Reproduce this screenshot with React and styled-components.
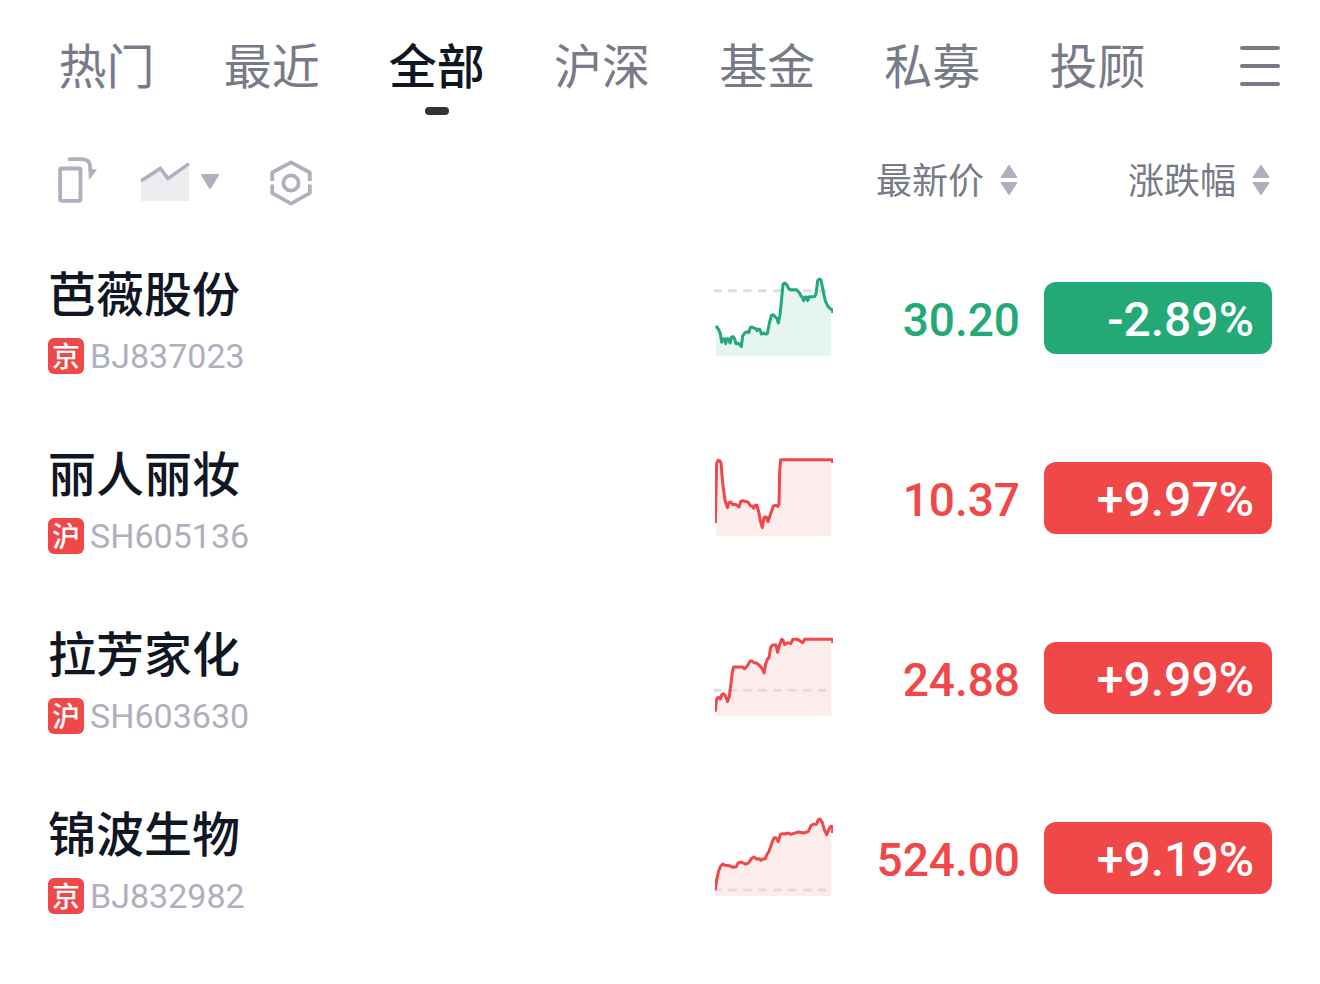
import React from "react";
import styled, { createGlobalStyle } from "styled-components";

const GlobalStyle = createGlobalStyle`
  * { box-sizing: border-box; }
  body {
    margin: 0;
    background: #fff;
    color: #111625;
    font-family: "Noto Sans CJK SC", sans-serif;
  }
  button {
    margin: 0;
    padding: 0;
    border: 0;
    background: none;
    color: inherit;
    font: inherit;
    cursor: pointer;
  }
  svg { display: block; flex: none; }
`;

const RED = "#f04848";
const GREEN = "#22a975";

const Header = styled.header`
  display: flex;
  height: 132px;
  padding: 0 40px 0 24px;
`;

const Tabs = styled.nav`
  display: flex;
  flex: 1;
`;

const Tab = styled.button`
  position: relative;
  flex: 1;
  padding-bottom: 6px;
  font-size: 48px;
  line-height: 64px;
  white-space: nowrap;
  color: ${(p) => (p.$active ? "#111625" : "#787b87")};
  font-weight: ${(p) => (p.$active ? 500 : 400)};
`;

const Indicator = styled.span`
  position: absolute;
  left: 50%;
  bottom: 17px;
  width: 24px;
  height: 8px;
  margin-left: -12px;
  border-radius: 4px;
  background: #333;
`;

const MenuButton = styled.button`
  display: flex;
  align-items: center;
  justify-content: flex-end;
  width: 100px;
`;

const Main = styled.main`
  padding: 0 48px;
`;

const Table = styled.table`
  width: 100%;
  table-layout: fixed;
  border-collapse: collapse;

  th, td { padding: 0; }
`;

const Col = styled.col`
  width: ${(p) => p.$width};
`;

const HeadRow = styled.tr`
  height: 96px;
`;

const Tools = styled.div`
  display: flex;
  align-items: center;
  gap: 40px;
  padding-left: 8px;
`;

const ToolButton = styled.button`
  display: flex;
  align-items: center;
  gap: 10px;
  margin-right: ${(p) => (p.$wide ? "8px" : "0")};
`;

const SortButton = styled.button`
  display: flex;
  align-items: center;
  gap: 16px;
  margin-left: auto;
  padding-right: 2px;
  color: #787b87;
  font-size: 36px;
  font-weight: 400;
  line-height: 48px;
  white-space: nowrap;
`;

const SortLabel = styled.span`
  padding-bottom: 4px;
`;

const StockRow = styled.tr`
  height: 180px;
`;

const NameCell = styled.th`
  text-align: left;
  font-weight: 500;
`;

const Name = styled.div`
  font-size: 48px;
  line-height: 58px;
`;

const CodeLine = styled.div`
  display: flex;
  align-items: center;
  gap: 6px;
  margin-top: 18px;
`;

const Market = styled.span`
  width: 36px;
  height: 36px;
  border-radius: 6px;
  background: ${RED};
  color: #fff;
  font-size: 28px;
  font-weight: 500;
  line-height: 34px;
  text-align: center;
`;

const Code = styled.span`
  color: #aeb0bd;
  font-family: Roboto, sans-serif;
  font-size: 34px;
  font-weight: 400;
  line-height: 36px;
`;

const Price = styled.div`
  padding-top: 4px;
  color: ${(p) => p.$color};
  font-family: Roboto, sans-serif;
  font-size: 46px;
  font-weight: 500;
  line-height: 72px;
  text-align: right;
`;

const Change = styled.div`
  height: 72px;
  margin-left: 24px;
  padding: 2px 18px 0 0;
  border-radius: 12px;
  background: ${(p) => p.$color};
  color: #fff;
  font-family: Roboto, sans-serif;
  font-size: 48px;
  font-weight: 500;
  line-height: 72px;
  text-align: right;
`;

function MenuIcon() {
  return (
    <svg width="40" height="44" viewBox="0 0 40 44" stroke="#787b87" strokeWidth="4" strokeLinecap="round" aria-hidden="true">
      <path d="M2 4H38M2 22H38M2 40H38" />
    </svg>
  );
}

function RotateIcon() {
  return (
    <svg width="44" height="56" viewBox="0 0 44 56" fill="none" stroke="#aeb0bd" strokeWidth="3.8" strokeLinecap="round" strokeLinejoin="round" aria-hidden="true">
      <rect x="4.1" y="16.5" width="20.4" height="32.3" rx="1.5" />
      <path d="M13.5 7.2H26Q34.2 7.2 34.2 15.4V18" />
      <path d="M33.2 17.5L40.2 18L33.4 26.5Z" fill="#aeb0bd" strokeWidth="1.2" />
    </svg>
  );
}

function TrendIcon() {
  return (
    <svg width="50" height="56" viewBox="0 0 50 56" fill="none" aria-hidden="true">
      <path d="M1 28L20.3 16L28.3 27L49 12V49H1Z" fill="#ededf0" />
      <path d="M2.4 28L20.3 16.4L28 26.6L47.6 12.6" stroke="#aeb0bd" strokeWidth="3.6" strokeLinecap="round" />
    </svg>
  );
}

function CaretIcon() {
  return (
    <svg width="20" height="56" viewBox="0 0 20 56" aria-hidden="true">
      <path d="M2 23H18L10 36Z" fill="#aeb0bd" stroke="#aeb0bd" strokeWidth="2" strokeLinejoin="round" />
    </svg>
  );
}

function SettingsIcon() {
  return (
    <svg width="46" height="56" viewBox="0 0 46 56" fill="none" stroke="#aeb0bd" strokeWidth="3.8" strokeLinejoin="round" aria-hidden="true">
      <path d="M4.2 29V20.5L23 10.3L41.8 20.5V29" />
      <path d="M4.2 32.6V41.2L23 51.6L41.8 41.2V32.6" />
      <circle cx="23" cy="31" r="7.6" />
    </svg>
  );
}

function SortIcon() {
  return (
    <svg width="18" height="32" viewBox="0 0 18 32" fill="#aeb0bd" aria-hidden="true">
      <path d="M8.4 1.2Q9 .4 9.6 1.2L17.2 12.8Q17.6 14 16.4 14H1.6Q.4 14 .8 12.8Z" />
      <path d="M8.4 30.8Q9 31.6 9.6 30.8L17.2 19.2Q17.6 18 16.4 18H1.6Q.4 18 .8 19.2Z" />
    </svg>
  );
}

function Sparkline({ color, fill, line, base }) {
  return (
    <svg width="120" height="84" viewBox="42 33 360 252" fill="none" aria-hidden="true">
      <svg x="48" y="33" width="346" height="240" viewBox="48 33 346 240">
        <path d={`M46 273L${line}V273Z`} fill={fill} />
      </svg>
      {base && (
        <path d={`M42 ${base}H380`} stroke="#dddddd" strokeWidth="9" strokeDasharray="18 27" strokeDashoffset="-1" strokeLinecap="round" />
      )}
      <svg x="45" y="33" width="354" height="240" viewBox="45 33 354 240">
        <path d={`M${line}`} stroke={color} strokeWidth="9" strokeLinejoin="round" />
      </svg>
    </svg>
  );
}

const stocks = [
  {
    name: "芭薇股份", market: "京", code: "BJ837023", price: "30.20", change: "-2.89%", base: 77,
    line: "46 187L51 186L57 196L61 206L65 232L69 221L74 222L77 236L81 221L86 222L90 234L95 216L100 215L104 222L108 236L114 235L119 238L124 245L128 213L135 203L142 200L146 203L151 188L156 186L163 190L168 191L171 197L176 192L180 194L184 207L191 204L195 207L202 206L208 175L214 151L220 149L226 156L231 161L235 174L240 150L245 100L249 58L254 54L261 60L266 71L272 74L290 74L298 83L303 93L307 96L311 107L316 96L320 96L323 107L328 95L344 95L348 87L353 47L358 42L363 45L370 80L376 108L384 124L392 132L398 135L398 144",
  },
  {
    name: "丽人丽妆", market: "沪", code: "SH605136", price: "10.37", change: "+9.97%",
    line: "46 234L50 55L54 46L59 47L63 54L68 115L75 165L82 188L87 173L92 171L99 179L107 178L117 186L122 169L127 167L144 171L151 182L157 183L161 190L166 181L171 181L177 204L182 232L187 248L192 217L199 216L204 230L212 206L220 183L227 181L233 184L237 178L239 80L242 44L398 44L398 54",
  },
  {
    name: "拉芳家化", market: "沪", code: "SH603630", price: "24.88", change: "+9.99%", base: 196,
    line: "46 260L49 227L52 219L58 217L61 222L66 208L71 206L77 214L83 230L88 214L93 175L97 141L101 126L127 126L134 131L142 122L149 110L154 107L162 113L170 114L179 122L187 131L192 144L197 116L202 103L207 98L212 67L218 60L228 60L233 82L239 58L245 43L249 45L254 59L262 53L272 56L279 43L292 43L299 47L308 53L314 43L398 43L398 54",
  },
  {
    name: "锦波生物", market: "京", code: "BJ832982", price: "524.00", change: "+9.19%", base: 255,
    line: "46 255L50 224L56 198L62 183L68 177L76 181L88 182L98 187L109 185L114 174L124 171L135 177L144 175L156 159L162 156L170 162L178 161L183 166L189 162L196 161L201 148L207 139L218 107L223 98L228 98L235 110L241 88L248 86L254 87L265 84L273 88L279 86L296 81L312 84L325 79L333 62L340 58L349 58L355 44L360 42L367 53L373 74L380 89L388 70L393 64L398 65L398 84",
  },
];

const tabs = ["热门", "最近", "全部", "沪深", "基金", "私募", "投顾"];

export default function App() {
  return (
    <>
      <GlobalStyle />
      <Header>
        <Tabs>
          {tabs.map((tab) => {
            const active = tab === "全部";
            return (
              <Tab key={tab} $active={active} aria-current={active ? "page" : undefined}>
                {tab}
                {active && <Indicator />}
              </Tab>
            );
          })}
        </Tabs>
        <MenuButton aria-label="菜单">
          <MenuIcon />
        </MenuButton>
      </Header>
      <Main>
        <Table>
          <colgroup>
            <Col $width="auto" />
            <Col $width="120px" />
            <Col $width="186px" />
            <Col $width="252px" />
          </colgroup>
          <thead>
            <HeadRow>
              <td colSpan={2}>
                <Tools>
                  <ToolButton aria-label="横屏"><RotateIcon /></ToolButton>
                  <ToolButton aria-label="走势图" $wide><TrendIcon /><CaretIcon /></ToolButton>
                  <ToolButton aria-label="设置"><SettingsIcon /></ToolButton>
                </Tools>
              </td>
              <th scope="col"><SortButton><SortLabel>最新价</SortLabel><SortIcon /></SortButton></th>
              <th scope="col"><SortButton><SortLabel>涨跌幅</SortLabel><SortIcon /></SortButton></th>
            </HeadRow>
          </thead>
          <tbody>
            {stocks.map((s) => {
              const down = s.change.startsWith("-");
              const color = down ? GREEN : RED;
              return (
                <StockRow key={s.code}>
                  <NameCell scope="row">
                    <Name>{s.name}</Name>
                    <CodeLine>
                      <Market>{s.market}</Market>
                      <Code>{s.code}</Code>
                    </CodeLine>
                  </NameCell>
                  <td><Sparkline color={color} fill={down ? "#e7f5f0" : "#fdecec"} line={s.line} base={s.base} /></td>
                  <td><Price $color={color}>{s.price}</Price></td>
                  <td><Change $color={color}>{s.change}</Change></td>
                </StockRow>
              );
            })}
          </tbody>
        </Table>
      </Main>
    </>
  );
}
